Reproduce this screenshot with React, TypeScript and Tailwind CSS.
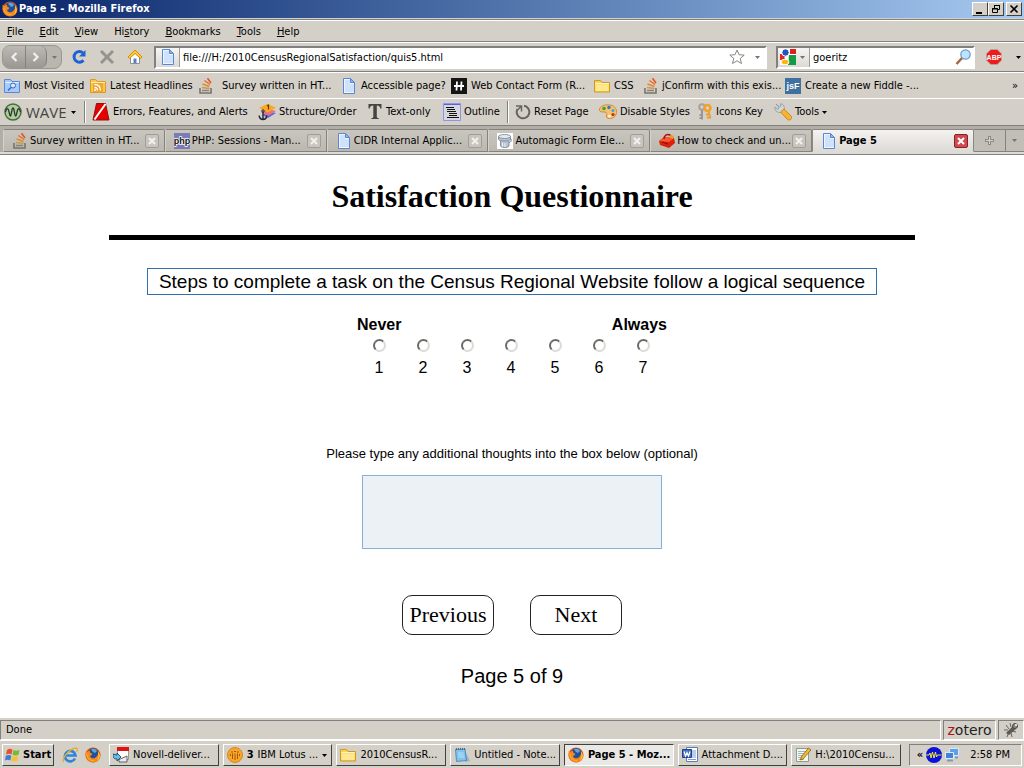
import { ReactNode } from 'react';

const pageIcon = (
    <svg viewBox="0 0 16 16" className="size-4 shrink-0">
        <path d="M2.5 .5h7l4 4v11h-11z" fill="#eef5ff" stroke="#5b86d6" />
        <path d="M4 2h5v4h4v8H4z" fill="#cfe2fc" />
        <path d="M9.5 .5v4h4z" fill="#8db4f0" stroke="#5b86d6" />
    </svg>
);

const stackIcon = (
    <svg viewBox="0 0 16 16" className="size-4 shrink-0" fill="none">
        <path d="M2 10v5h11v-5" stroke="#77736d" strokeWidth="1.6" />
        <path d="M4 12.5h7" stroke="#8b8175" strokeWidth="1.5" />
        <path d="M4 9.5l7.500 1" stroke="#c59a55" strokeWidth="1.5" />
        <path d="M4.500 6l7 2.500" stroke="#e08a2c" strokeWidth="1.5" />
        <path d="M6.500 2.500l5.500 4" stroke="#ee6b1e" strokeWidth="1.5" />
        <path d="M9.500 .2l3.500 4.800" stroke="#e5501c" strokeWidth="1.5" />
    </svg>
);

const firefoxIcon = (
    <svg viewBox="0 0 16 16" className="size-4 shrink-0">
        <circle cx="8" cy="8" r="7.6" fill="#d9540b" />
        <circle cx="8.3" cy="6.5" r="5.3" fill="#1f4f9e" />
        <path d="M6 2.5c2-1.5 5-.5 6 1.500l-2 2-2-1z" fill="#5fa4dc" />
        <path d="M.8 3.500L2.500 5l2-1.500L5.500 6l2 .8-1 1.500-1.500 .7c.5 2.500 4 3 5.500 1.500 2.500-1.500 3-4 2.300-6.500 3 3 3 7.500-.3 10C7 17.500-1 13.500 .8 3.500z" fill="#f58a1a" />
        <path d="M13 4.500c2.500 3 2 7-1 9.300 1-2 2.200-5 1-9.300z" fill="#fcd23c" />
        <path d="M2 7c0 4 3 7 7 6.500" fill="none" stroke="#fbb13c" />
    </svg>
);

const folderIcon = (
    <svg viewBox="0 0 16 16" className="size-4 shrink-0">
        <path d="M.5 14V2.500h6l1.500 2h7.500V14z" fill="#f7d35c" stroke="#d09a1c" />
        <path d="M1.500 6.500h13v6.500h-13z" fill="#ffe88f" />
        <path d="M1 5.500h14" stroke="#fff5c4" />
    </svg>
);

const visitedIcon = (
    <svg viewBox="0 0 16 16" className="size-4 shrink-0" fill="none">
        <path d="M.5 14.500v-13h6l1.500 2h7.500v11z" fill="#a9c9f8" stroke="#5689da" />
        <path d="M1 4.500h14" stroke="#e2eeff" />
        <circle cx="9" cy="7.500" r="2.500" fill="#dceaff" stroke="#3568c4" />
        <path d="M7 9.500l-3 3" stroke="#3568c4" strokeWidth="1.5" />
    </svg>
);

const rssIcon = (
    <svg viewBox="0 0 16 16" className="size-4 shrink-0" fill="none">
        <path d="M.5 14.500v-13h5l2 2h8v11z" fill="#f9c74f" stroke="#dc9a1e" />
        <path d="M1 4.500h14" stroke="#fff0b0" />
        <path d="M3 5h10v9H3z" fill="#f0a62e" />
        <path d="M4.500 6.500c4 0 6 2 6 6M4.500 9.500c2 0 3 1 3 3" stroke="#fff" strokeWidth="1.3" />
        <circle cx="5" cy="12" r="1" fill="#fff" />
    </svg>
);

const formIcon = (
    <svg viewBox="0 0 16 16" className="size-4 shrink-0">
        <path d="M0 0h16v16H0z" fill="#151515" />
        <path d="M6 3.500l-.5 9M10.500 3.500l-.5 9M3 8h10" stroke="#fff" strokeWidth="1.8" />
    </svg>
);

const fiddleIcon = (
    <svg viewBox="0 0 16 16" className="size-4 shrink-0">
        <path d="M0 0h16v16H0z" fill="#3e719f" />
        <text x="8" y="11" textAnchor="middle" fontSize="9" fontWeight="bold" fill="#fff" fontFamily="Liberation Sans">jsF</text>
    </svg>
);

const phpIcon = (
    <svg viewBox="0 0 16 16" className="size-4 shrink-0">
        <path d="M0 0h16v16H0z" fill="#7a7cb8" />
        <text x="8" y="11" textAnchor="middle" fontSize="9" fontWeight="bold" fill="#111" stroke="#fff" strokeWidth="1.5" paintOrder="stroke" fontFamily="Liberation Sans">php</text>
    </svg>
);

const dbIcon = (
    <svg viewBox="0 0 16 16" className="size-4 shrink-0">
        <path d="M0 0h16v16H0z" fill="#fff" />
        <path d="M1.500 3.500v3c1 2 11 2 12 0v-3M3.500 8v5c1 2 8 2 8.500 0V8" fill="#b7c3ce" stroke="#75828f" strokeWidth=".8" />
        <ellipse cx="7.5" cy="3.5" rx="6" ry="2" fill="#e3e9ef" stroke="#75828f" strokeWidth=".8" />
        <path d="M5.500 9.500v4M8 10v4" stroke="#edf2f6" />
        <path d="M13 5.500c2.500 1 1 4-1 4" fill="none" stroke="#5a83b4" />
    </svg>
);

const toolboxIcon = (
    <svg viewBox="0 0 16 16" className="size-4 shrink-0">
        <path d="M0 8l5-4 10 1 1 5-6 5-9-3z" fill="#d9220c" />
        <path d="M0 8l5-4 10 1-5 4z" fill="#fb5630" />
        <path d="M5 6c0-4 3-5 6-4l2 3" fill="none" stroke="#a01408" strokeWidth="1.5" />
        <path d="M11 2l4 1-1 3-3-1z" fill="#f39a1d" />
        <path d="M3 9l6 2" stroke="#801006" />
    </svg>
);

const waveIcon = (
    <svg viewBox="0 0 18 18" className="size-[18px] shrink-0" fill="none">
        <circle cx="9" cy="9" r="8" fill="#b0cf9f" stroke="#486b42" strokeWidth="1.5" />
        <path d="M1.500 9c1-4 2.500-4.500 3.300-1l1 4c.5 1.500 1 1.500 1.400-1l1-5c.3-1.500 1.300-1.500 1.600 0l1 5c.4 2.500 1 2.500 1.500 1l1-4c.8-3.500 2-3 3.200 1" stroke="#2c3a2b" strokeWidth="1.3" />
    </svg>
);

const errorsIcon = (
    <svg viewBox="0 0 18 18" className="size-[18px] shrink-0">
        <path d="M4.500 .5h9L17 17H1z" fill="#e40000" stroke="#901010" />
        <path d="M13.500 1L2.500 16.500" stroke="#fff" strokeWidth="2" />
    </svg>
);

const structureIcon = (
    <svg viewBox="0 0 18 18" className="size-[18px] shrink-0">
        <path d="M4 12l6-4 8 2-8 5z" fill="#5a6be0" />
        <path d="M3 9l7-3 8 2-8 5z" fill="#e9717c" />
        <path d="M1 5l8-4 9 3.500-8 5z" fill="#f9a825" />
        <path d="M9 3l1.500-1v4.500" fill="none" stroke="#6b3b00" strokeWidth="1.2" />
        <circle cx="5" cy="8" r="1.2" fill="none" stroke="#202838" />
        <path d="M5 9v7.500M1 12.500c.5 2.500 2 4 4 4s3.500-1.500 4-4" fill="none" stroke="#202838" strokeWidth="1.4" />
    </svg>
);

const textOnlyIcon = (
    <svg viewBox="0 0 16 18" className="h-[18px] w-4 shrink-0">
        <path d="M1.500 1h13v4.500h-1.200C13 3.500 12 2.500 9.800 2.500v11.300c0 1 .4 1.200 2 1.400V16H4.300v-.8c1.600-.2 2-.4 2-1.400V2.500C4 2.500 3 3.500 2.700 5.500H1.500z" fill="#444" />
    </svg>
);

const outlineIcon = (
    <svg viewBox="0 0 18 18" className="size-[18px] shrink-0">
        <path d="M.5 .5h17v17H.5z" fill="#d6d6df" stroke="#8f92ec" />
        <path d="M1 1.500h16" stroke="#5b60e6" />
        <path d="M3 4.500h8M4 6.500h8M4 8.500h9M6 10.500h8M6 12.500h8M4 14.500h12" stroke="#111" />
    </svg>
);

const resetIcon = (
    <svg viewBox="0 0 16 16" className="size-4 shrink-0" fill="none">
        <path d="M9 1.800A6.300 6.300 0 1 1 2.500 5" stroke="#67645f" strokeWidth="2" />
        <path d="M1 2h5.500v5.500M6 2.500L2 6.500" stroke="#67645f" strokeWidth="1.5" />
    </svg>
);

const paletteIcon = (
    <svg viewBox="0 0 18 18" className="size-[18px] shrink-0">
        <path d="M.5 6C2 2 8 1 13 2.500c4 1.500 6 6 3.500 10-2 3.500-8 4-9 1.500-.6-2 1-3-.5-4.500C5 8 0 10.500 .5 6z" fill="#f5c26b" stroke="#c98d42" />
        <circle cx="5" cy="5.500" r="1.7" fill="#35a13b" />
        <circle cx="10" cy="4.500" r="1.7" fill="#3a70d0" />
        <circle cx="14" cy="7.500" r="1.5" fill="#3ba7dc" />
        <circle cx="14" cy="11.500" r="1.6" fill="#d2281e" />
        <circle cx="10.5" cy="13" r="1.6" fill="#fff3c8" />
    </svg>
);

const keysIcon = (
    <svg viewBox="0 0 16 18" className="h-[18px] w-4 shrink-0" fill="none">
        <circle cx="5" cy="4" r="2.8" stroke="#a3a3a3" strokeWidth="2" />
        <path d="M5 7v9.500M5 12H2.500M5 15H2.500" stroke="#979797" strokeWidth="2" />
        <circle cx="10.5" cy="5" r="3" stroke="#f0a224" strokeWidth="2.5" />
        <path d="M11.500 8.500l2 7M12 11l-3 1M13 14l-3 1" stroke="#e9a035" strokeWidth="2" />
    </svg>
);

const wrenchIcon = (
    <svg viewBox="0 0 18 18" className="size-[18px] shrink-0">
        <path d="M2 1l3.500 3L7 3 6.500 .8C9.500 1 11 4 10 7L8 9C5 10.500 .5 8.500 .8 4L4 6.500l1-2z" fill="#cfd6dd" stroke="#8b939b" strokeWidth=".8" />
        <path d="M6.500 9L10 6l7.500 7.500c1 2.500-2 4.500-4 3z" fill="#f8b430" stroke="#c27a10" strokeWidth=".8" />
    </svg>
);

const novellIcon = (
    <svg viewBox="0 0 16 16" className="size-4 shrink-0">
        <path d="M4.500 .5h11v12h-11z" fill="#fff" stroke="#999" />
        <path d="M4 0h12v4H4z" fill="#e01313" />
        <path d="M0 7l4 1V6l4 4-4 4v-2c-3 0-4-1-4-5z" fill="#62bdee" stroke="#123b5c" strokeWidth=".8" />
        <path d="M6 12.500l8-3.500v6H6z" fill="#e7eaf0" stroke="#444" strokeWidth=".8" />
    </svg>
);

const lotusIcon = (
    <svg viewBox="0 0 16 16" className="size-4 shrink-0" fill="none">
        <circle cx="8" cy="8" r="7.5" fill="#f5a72c" stroke="#d98512" />
        <path d="M3.500 9V7M5.500 12V6.500M8 13V6.500M10.500 12V6.500M12.500 9V7" stroke="#a85400" />
        <path d="M4 5h2M7 4.500h2M10 5h2" stroke="#a85400" />
    </svg>
);

const notepadIcon = (
    <svg viewBox="0 0 16 16" className="size-4 shrink-0">
        <path d="M11 4l5 10-5 1z" fill="#9cb4c8" />
        <path d="M1.500 2.500l9.500-.5 1.500 11.500-10 1z" fill="#7fc4ee" stroke="#3a7fb8" strokeWidth=".8" />
        <path d="M4 6h5.500M4 8h6M4.500 10h6" stroke="#b9e2f8" />
        <path d="M2 2h9" stroke="#44515c" strokeWidth="1.5" strokeDasharray="1 1" />
    </svg>
);

const wordIcon = (
    <svg viewBox="0 0 16 16" className="size-4 shrink-0">
        <path d="M4.500 .5h11v14h-11z" fill="#fff" stroke="#5b7cb8" />
        <path d="M10 4h4M10 6h4M10 8h4M10 10h4M6 12.500h8" stroke="#7d9bd0" />
        <path d="M.5 2.500h9v8h-9z" fill="#4672c0" stroke="#1f4287" />
        <path d="M2 4.500l1.500 4.500L5 5.500 6.500 9 8 4.500" fill="none" stroke="#fff" strokeWidth="1.2" />
    </svg>
);

const editorIcon = (
    <svg viewBox="0 0 16 16" className="size-4 shrink-0">
        <path d="M1.500 1.500h12v13h-12z" fill="#f4f7ee" stroke="#8a9a94" />
        <path d="M3 4.500h8M3 6.500h7M3 8.500h5M3 10.500h4" stroke="#9cb5c9" />
        <path d="M3 13l4-2 2 2z" fill="#6bb54a" />
        <path d="M13.500 1L16 3l-8 9-2.500 1 .7-3z" fill="#f3ba36" stroke="#8a6112" strokeWidth=".8" />
    </svg>
);

const menus = [
    { before: '', key: 'F', rest: 'ile' },
    { before: '', key: 'E', rest: 'dit' },
    { before: '', key: 'V', rest: 'iew' },
    { before: 'Hi', key: 's', rest: 'tory' },
    { before: '', key: 'B', rest: 'ookmarks' },
    { before: '', key: 'T', rest: 'ools' },
    { before: '', key: 'H', rest: 'elp' },
];

const bookmarks = [
    { label: 'Most Visited', icon: visitedIcon, width: 'w-[86px] gap-1' },
    { label: 'Latest Headlines', icon: rssIcon, width: 'w-[108px] gap-1' },
    { label: 'Survey written in HT...', icon: stackIcon, width: 'w-[143px] gap-2' },
    { label: 'Accessible page?', icon: pageIcon, width: 'w-[110px] gap-1' },
    { label: 'Web Contact Form (R...', icon: formIcon, width: 'w-[143px] gap-1' },
    { label: 'CSS', icon: folderIcon, width: 'w-[49px] gap-1' },
    { label: 'jConfirm with this exis...', icon: stackIcon, width: 'w-[142px] gap-[3px]' },
    { label: 'Create a new Fiddle -...', icon: fiddleIcon, width: 'w-[142px] gap-1' },
];

const waveTools = [
    { label: 'Errors, Features, and Alerts', icon: errorsIcon, width: 'w-[166px]' },
    { label: 'Structure/Order', icon: structureIcon, width: 'w-[109px]' },
    { label: 'Text-only', icon: textOnlyIcon, width: 'w-[76px]' },
    { label: 'Outline', icon: outlineIcon, width: 'w-16' },
];

const pageTools = [
    { label: 'Reset Page', icon: resetIcon, width: 'w-[84px]' },
    { label: 'Disable Styles', icon: paletteIcon, width: 'w-[98px]' },
    { label: 'Icons Key', icon: keysIcon, width: 'w-[77px]' },
    { label: 'Tools', icon: wrenchIcon, width: '', menu: true },
];

const tabs = [
    { label: 'Survey written in HT...', icon: stackIcon },
    { label: 'PHP: Sessions - Man...', icon: phpIcon },
    { label: 'CIDR Internal Applic...', icon: pageIcon },
    { label: 'Automagic Form Ele...', icon: dbIcon },
    { label: 'How to check and un...', icon: toolboxIcon },
    { label: 'Page 5', icon: pageIcon, active: true },
];

const tasks = [
    { label: 'Novell-deliver...', icon: novellIcon },
    { label: 'IBM Lotus ...', icon: lotusIcon, count: 3 },
    { label: '2010CensusR...', icon: folderIcon },
    { label: 'Untitled - Note...', icon: notepadIcon },
    { label: 'Page 5 - Moz...', icon: firefoxIcon, active: true },
    { label: 'Attachment D....', icon: wordIcon },
    { label: 'H:\\2010Censu...', icon: editorIcon },
];

const raised = 'border border-t-white border-l-white border-r-[#404040] border-b-[#404040] bg-[#d4d0c8]';
const pressed = 'border border-t-[#404040] border-l-[#404040] border-r-white border-b-white bg-[#eae8e4]';
const sunken = 'border-t-[#808080] border-l-[#808080] border-r-white border-b-white';

function Caret({ className = 'text-black' }: { className?: string }) {
    return (
        <svg viewBox="0 0 5 3" className={`h-[3px] w-[5px] shrink-0 ${className}`}>
            <path d="M0 0h5L2.500 3z" fill="currentColor" />
        </svg>
    );
}

function Separator() {
    return <div className="mr-1.5 h-[22px] w-0.5 border-r border-l border-l-[#808080] border-r-white" />;
}

function ToolButton({ label, icon, width, menu }: { label: string; icon: ReactNode; width: string; menu?: boolean }) {
    return (
        <button className={`flex shrink-0 items-center gap-[3px] ${width}`}>
            {icon}
            <span>{label}</span>
            {menu && <Caret />}
        </button>
    );
}

function TitleBar() {
    return (
        <header className="flex h-[19px] items-center border-b border-[#d4d0c8] bg-linear-to-r from-[#0a246a] to-[#a6caf0] px-0.5">
            {firefoxIcon}
            <h1 className="ml-px flex-1 font-bold text-white">Page 5 - Mozilla Firefox</h1>
            <button aria-label="Minimize" className={`flex h-3.5 w-4 items-end justify-center ${raised}`}>
                <svg viewBox="0 0 10 10" className="size-2.5"><path d="M1 8h6" stroke="#000" strokeWidth="2" /></svg>
            </button>
            <button aria-label="Restore" className={`flex h-3.5 w-4 items-center justify-center ${raised}`}>
                <svg viewBox="0 0 10 10" className="size-2.5" fill="none" stroke="#000">
                    <path d="M3.500 4V1.500h5v4H7M3 1.500h6M1.500 4.500h5v4h-5zM1 5h6" />
                </svg>
            </button>
            <button aria-label="Close" className={`ml-0.5 flex h-3.5 w-4 items-center justify-center ${raised}`}>
                <svg viewBox="0 0 10 10" className="size-2.5"><path d="M1.500 1.500l7 7M8.500 1.500l-7 7" stroke="#000" strokeWidth="1.6" /></svg>
            </button>
        </header>
    );
}

function NavBar() {
    return (
        <div className="flex h-[30px] items-center border-t border-b border-t-white border-b-[#808080] pr-[3px] pl-0.5">
            <div className="flex h-6 w-[60px] items-center rounded-[8px] border border-[#9a9791] bg-[#b9b6af]">
                <button aria-label="Back" className="flex h-full w-[22px] items-center justify-center rounded-l-[7px] bg-linear-to-b from-[#bcbab5] to-[#9a9792]">
                    <svg viewBox="0 0 10 12" className="h-3 w-2.5"><path d="M7.500 2L3.500 6l4 4" fill="none" stroke="#f1f0ed" strokeWidth="2.2" /></svg>
                </button>
                <button aria-label="Forward" className="flex h-full w-[22px] items-center justify-center rounded-r-[7px] border-x border-[#84817b] bg-linear-to-b from-[#bcbab5] to-[#9a9792]">
                    <svg viewBox="0 0 10 12" className="h-3 w-2.5"><path d="M2.500 2l4 4-4 4" fill="none" stroke="#f1f0ed" strokeWidth="2.2" /></svg>
                </button>
                <button aria-label="Recent pages" className="flex flex-1 justify-center"><Caret className="text-[#77746e]" /></button>
            </div>
            <button aria-label="Reload" className="ml-[9px]">
                <svg viewBox="0 0 16 16" className="size-4">
                    <path d="M12.500 11.200A5.300 5.300 0 1 1 12 4" fill="none" stroke="#1d62d5" strokeWidth="3" />
                    <path d="M14.500 1v6.500H8z" fill="#1d62d5" />
                </svg>
            </button>
            <button aria-label="Stop" className="ml-3">
                <svg viewBox="0 0 16 16" className="size-4"><path d="M2 2l12 12M14 2L2 14" stroke="#96938d" strokeWidth="3" /></svg>
            </button>
            <button aria-label="Home" className="ml-3">
                <svg viewBox="0 0 16 16" className="size-4">
                    <path d="M3.500 8v6.500h9V8L8 4z" fill="#fff" stroke="#8b8f99" />
                    <path d="M8 1L1 8l1.500 1.500L8 4.500l5.500 5L15 8z" fill="#ffcd2e" stroke="#d88b09" />
                    <path d="M6.500 9.500h3V14h-3z" fill="#5a7fc4" />
                </svg>
            </button>
            <div className={`ml-[11px] flex h-[23px] flex-1 items-center border-2 bg-white ${sunken}`}>
                <span className="flex h-full w-6 items-center justify-center border-r border-[#a09d97] bg-linear-to-b from-[#f6f5f3] to-[#dddad5]">{pageIcon}</span>
                <input aria-label="Location" className="h-full min-w-0 flex-1 pl-[3px] outline-none" defaultValue="file:///H:/2010CensusRegionalSatisfaction/quis5.html" />
                <button aria-label="Bookmark this page">
                    <svg viewBox="0 0 16 16" className="size-4"><path d="M8 1l2 4.700 5.200 .4-4 3.400 1.300 5L8 11.800l-4.500 2.700 1.300-5-4-3.400L6 5.700z" fill="#fff" stroke="#8a8781" /></svg>
                </button>
                <button aria-label="Show history" className="ml-1 flex w-4 justify-center"><Caret className="text-[#77746e]" /></button>
            </div>
            <div className={`ml-[9px] flex h-[23px] w-[199px] items-center border-2 bg-white ${sunken}`}>
                <button aria-label="Search engine" className="flex h-full w-8 items-center gap-1 border-r border-[#a09d97] bg-linear-to-b from-[#f6f5f3] to-[#dddad5] pl-0.5">
                    <svg viewBox="0 0 16 16" className="size-4">
                        <path d="M0 0h16v16H0z" fill="#fff" />
                        <path d="M10 0h6v5h-6z" fill="#dd1f1f" />
                        <path d="M9 6h7v10H8z" fill="#139a42" />
                        <path d="M0 5h5v6H0z" fill="#dd2b22" />
                        <circle cx="5.5" cy="3.5" r="3.7" fill="#2357b8" stroke="#fff" />
                        <path d="M4 8l5 2-3 2z" fill="#fff" />
                        <ellipse cx="5" cy="13" rx="4" ry="2.8" fill="#fbb614" stroke="#fff" />
                    </svg>
                    <Caret className="text-[#77746e]" />
                </button>
                <input aria-label="Search" className="h-full min-w-0 flex-1 pl-[3px] outline-none" defaultValue="goeritz" />
                <button aria-label="Go" className="mr-0.5">
                    <svg viewBox="0 0 16 16" className="size-4">
                        <path d="M7.500 8.500L1.500 15" stroke="#a5673a" strokeWidth="2.5" />
                        <circle cx="10.5" cy="5.5" r="4.7" fill="#bfe3fa" stroke="#6d9bc8" strokeWidth="1.2" />
                    </svg>
                </button>
            </div>
            <button aria-label="Adblock Plus" className="ml-[11px]">
                <svg viewBox="0 0 16 16" className="size-4">
                    <path d="M4.800 .5h6.400l4.300 4.300v6.400l-4.300 4.300H4.800L.5 11.200V4.800z" fill="#ed1c1c" stroke="#b9a09c" />
                    <text x="8" y="10.5" textAnchor="middle" fontSize="7" fontWeight="bold" fill="#fff" fontFamily="Liberation Sans Narrow, Liberation Sans">ABP</text>
                </svg>
            </button>
            <button aria-label="Adblock menu" className="ml-3.5"><Caret /></button>
        </div>
    );
}

function TabStrip() {
    return (
        <nav className="flex h-[29px] items-start border-b border-b-[#808080] bg-[#b2aea6] pt-[3px] pl-[3px] shadow-[inset_0_-2px_0_#dedbd6]">
            {tabs.map((tab) => (
                <div
                    key={tab.label}
                    className={`flex h-[23px] min-w-0 flex-1 items-center gap-0.5 rounded-t-[2px] border pr-[5px] pl-2 whitespace-nowrap ${
                        tab.active
                            ? 'border-[#8c8983] border-b-[#dedbd6] bg-linear-to-b from-[#f4f3f1] to-[#dedbd6] font-bold'
                            : 'border-t-[#85827c] border-r-[#85827c] border-b-[#85827c] border-l-[#d5d2cc] bg-linear-to-b from-[#c9c6bf] to-[#bbb8b0]'
                    }`}
                >
                    {tab.icon}
                    <a href="#" className="min-w-0 flex-1">{tab.label}</a>
                    <button
                        aria-label={`Close ${tab.label}`}
                        className={`flex size-3.5 shrink-0 items-center justify-center rounded-[2px] border ${
                            tab.active ? 'border-[#8c1f24] bg-[#cf4a50] text-white' : 'border-[#a19e98] bg-[#c8c5bf] text-[#f2f1ef]'
                        }`}
                    >
                        <svg viewBox="0 0 8 8" className="size-2"><path d="M1 1l6 6M7 1L1 7" stroke="currentColor" strokeWidth="2" /></svg>
                    </button>
                </div>
            ))}
            <button aria-label="New tab" className="flex h-[23px] w-8 items-center justify-center border-t border-r border-b border-[#85827c] bg-[#c1beb7]">
                <svg viewBox="0 0 9 9" className="size-[9px]"><path d="M4.500 0v9M0 4.500h9" stroke="#8d8a84" strokeWidth="3" /><path d="M4.500 1v7M1 4.500h7" stroke="#d6d3cd" /></svg>
            </button>
            <button aria-label="List all tabs" className="flex h-[23px] w-[18px] items-center justify-center border-t border-b border-[#85827c] bg-[#c1beb7]">
                <Caret className="text-[#77746e]" />
            </button>
        </nav>
    );
}

function Questionnaire() {
    return (
        <main className="flex flex-1 flex-col items-center bg-white px-2 pt-[22px] font-['Liberation_Sans',Arial,sans-serif] text-black">
            <h2 className="font-['Liberation_Serif','Times_New_Roman',serif] text-[32px] leading-[38px] font-bold">Satisfaction Questionnaire</h2>
            <hr className="mt-5 w-4/5 border-t-[5px] border-black" />
            <p className="mt-7 border border-[#336fa8] px-[11px] text-[19px] leading-[25px]">
                Steps to complete a task on the Census Regional Website follow a logical sequence
            </p>
            <div role="radiogroup" aria-label="Rating" className="mt-5 w-[310px]">
                <div className="flex justify-between text-base leading-5 font-bold">
                    <span>Never</span>
                    <span>Always</span>
                </div>
                <div className="mt-1 mr-0.5 grid grid-cols-7">
                    {[1, 2, 3, 4, 5, 6, 7].map((n) => (
                        <label key={n} className="flex flex-col items-center gap-1.5 text-base leading-5">
                            <input
                                type="radio"
                                name="rating"
                                value={n}
                                className="size-[13px] appearance-none rounded-full border-2 border-t-[#6b6b6b] border-r-[#dedbd6] border-b-[#dedbd6] border-l-[#6b6b6b] bg-white"
                            />
                            {n}
                        </label>
                    ))}
                </div>
            </div>
            <label htmlFor="thoughts" className="mt-[68px] text-[13px] leading-4">
                Please type any additional thoughts into the box below (optional)
            </label>
            <textarea id="thoughts" className="mt-[13px] h-[74px] w-[300px] resize-none border border-[#84b0dc] bg-[#ecf1f6]" />
            <div className="mt-[46px] flex gap-9 font-['Liberation_Serif','Times_New_Roman',serif] text-[22px]">
                <button className="h-10 w-[92px] rounded-[10px] border border-[#222]">Previous</button>
                <button className="h-10 w-[92px] rounded-[10px] border border-[#222]">Next</button>
            </div>
            <p className="mt-[29px] text-[20px] leading-6">Page 5 of 9</p>
        </main>
    );
}

function StatusBar() {
    return (
        <footer className="flex h-[22px] gap-0.5 pt-0.5">
            <span className={`flex flex-1 items-center border pl-[5px] ${sunken}`}>Done</span>
            <button className={`w-[53px] border text-center font-['DejaVu_Sans',sans-serif] text-[14px] leading-4 text-[#222] ${sunken}`}>
                <span className="text-[#a5151b]">z</span>otero
            </button>
            <button aria-label="Firebug" className={`flex w-[26px] items-center justify-center border ${sunken}`}>
                <svg viewBox="0 0 16 16" className="size-4" fill="none">
                    <path d="M3 3l3 4M1 8h4M4 15l2-5M9 15l-1-4M13 10l-4-1M7 1l1 4" stroke="#66635e" />
                    <path d="M3 11l7-7 3 3-7 6z" fill="#5c5a56" />
                    <circle cx="12" cy="4" r="2.5" fill="#8a8883" stroke="#4b4946" />
                    <circle cx="13" cy="3" r="1" fill="#fff" />
                </svg>
            </button>
        </footer>
    );
}

function Taskbar() {
    return (
        <footer className="flex h-7 items-center border-t border-white px-0.5 pt-px">
            <button className={`flex h-[22px] w-[52px] items-center gap-0.5 pl-0.5 font-bold ${raised}`}>
                <svg viewBox="0 0 16 16" className="size-4 shrink-0">
                    <path d="M2 3c2-1.500 3.500-1.500 5.500-.3L6.500 7.500C5 6.500 3 6.500 1 7.500z" fill="#e8512b" />
                    <path d="M8.500 3c2 1 4 1 6-.2l-1 4.900c-2 1-4 1-6 0z" fill="#77b933" />
                    <path d="M.8 8.700c2-1 4-1 5.500 0l-1 4.800c-1.500-1-3.500-1-5.300 0z" fill="#3d7bd8" />
                    <path d="M7.300 9c2 1 4 1 6 0l-1 4.800c-2 1-4 1-6 0z" fill="#f9c22b" />
                </svg>
                Start
            </button>
            <a href="#" aria-label="Internet Explorer" className="ml-2">
                <svg viewBox="0 0 16 16" className="size-4" fill="none">
                    <path d="M13 11.500A5.300 5.300 0 1 1 13.500 8.500H4" stroke="#2e86dc" strokeWidth="2.7" />
                    <path d="M2 15C-2 13 8 1 14 1c2.500 .5 1 3 .5 4" stroke="#e2b133" strokeWidth="1.3" />
                </svg>
            </a>
            <a href="#" aria-label="Firefox" className="ml-[7px]">{firefoxIcon}</a>
            <div className="ml-2 flex flex-1 gap-1">
                {tasks.map((task) => (
                    <button
                        key={task.label}
                        className={`flex h-[22px] min-w-0 flex-1 items-center gap-1 pl-[3px] text-left whitespace-nowrap ${
                            task.active ? `font-bold ${pressed}` : raised
                        }`}
                    >
                        {task.icon}
                        {task.count && <b>{task.count}</b>}
                        <span>{task.label}</span>
                        {task.count && <Caret className="mr-1 ml-auto text-black" />}
                    </button>
                ))}
            </div>
            <div className={`ml-2 flex h-[22px] w-[113px] items-center border pl-1 ${sunken}`}>
                <button aria-label="Show hidden icons" className="w-3 font-bold">«</button>
                <svg viewBox="0 0 16 16" className="size-4">
                    <circle cx="8" cy="8" r="8" fill="#0a12d8" />
                    <path d="M0 8h3l1-2 1 5 1.500-6L8 11l1.500-6 1 5 1-2h4" fill="none" stroke="#f2e83c" />
                </svg>
                <svg viewBox="0 0 16 16" className="ml-0.5 size-4">
                    <path d="M5.500 1.500h9v7h-9z" fill="#5aa0ea" stroke="#dbe7f5" />
                    <path d="M1.500 5.500h8v6h-8z" fill="#3f83dc" stroke="#e3ecf7" />
                    <path d="M3 13.500h6M11 10.500h3" stroke="#8098b8" strokeWidth="2" />
                </svg>
                <time className="ml-auto pr-[11px]">2:58 PM</time>
            </div>
        </footer>
    );
}

export default function App() {
    return (
        <div className="flex min-h-screen flex-col bg-[#d4d0c8] font-['DejaVu_Sans_Condensed','DejaVu_Sans',sans-serif] text-[11px] leading-[14px] text-black">
            <TitleBar />
            <nav className="flex h-[23px] items-center gap-4 border-t border-b border-[#808080] px-[7px] pt-0.5 shadow-[inset_0_1px_0_#fff]">
                {menus.map((menu) => (
                    <button key={menu.rest}>
                        {menu.before}<span className="underline">{menu.key}</span>{menu.rest}
                    </button>
                ))}
            </nav>
            <NavBar />
            <nav className="flex h-[26px] items-center border-t border-white pl-1 whitespace-nowrap">
                {bookmarks.map((b) => (
                    <a key={b.label} href="#" className={`flex shrink-0 items-center ${b.width}`}>
                        {b.icon}
                        {b.label}
                    </a>
                ))}
                <button aria-label="More bookmarks" className="mr-1.5 ml-auto">»</button>
            </nav>
            <div className="flex h-7 items-center border-t border-b border-t-white border-b-[#808080] pl-1 whitespace-nowrap">
                <button className="flex w-20 items-center gap-1 font-['Open_Sans',sans-serif] text-[15px] text-[#444]">
                    {waveIcon}
                    WAVE
                    <Caret />
                </button>
                <Separator />
                {waveTools.map((t) => <ToolButton key={t.label} {...t} />)}
                <Separator />
                {pageTools.map((t) => <ToolButton key={t.label} {...t} />)}
            </div>
            <TabStrip />
            <Questionnaire />
            <StatusBar />
            <Taskbar />
        </div>
    );
}
